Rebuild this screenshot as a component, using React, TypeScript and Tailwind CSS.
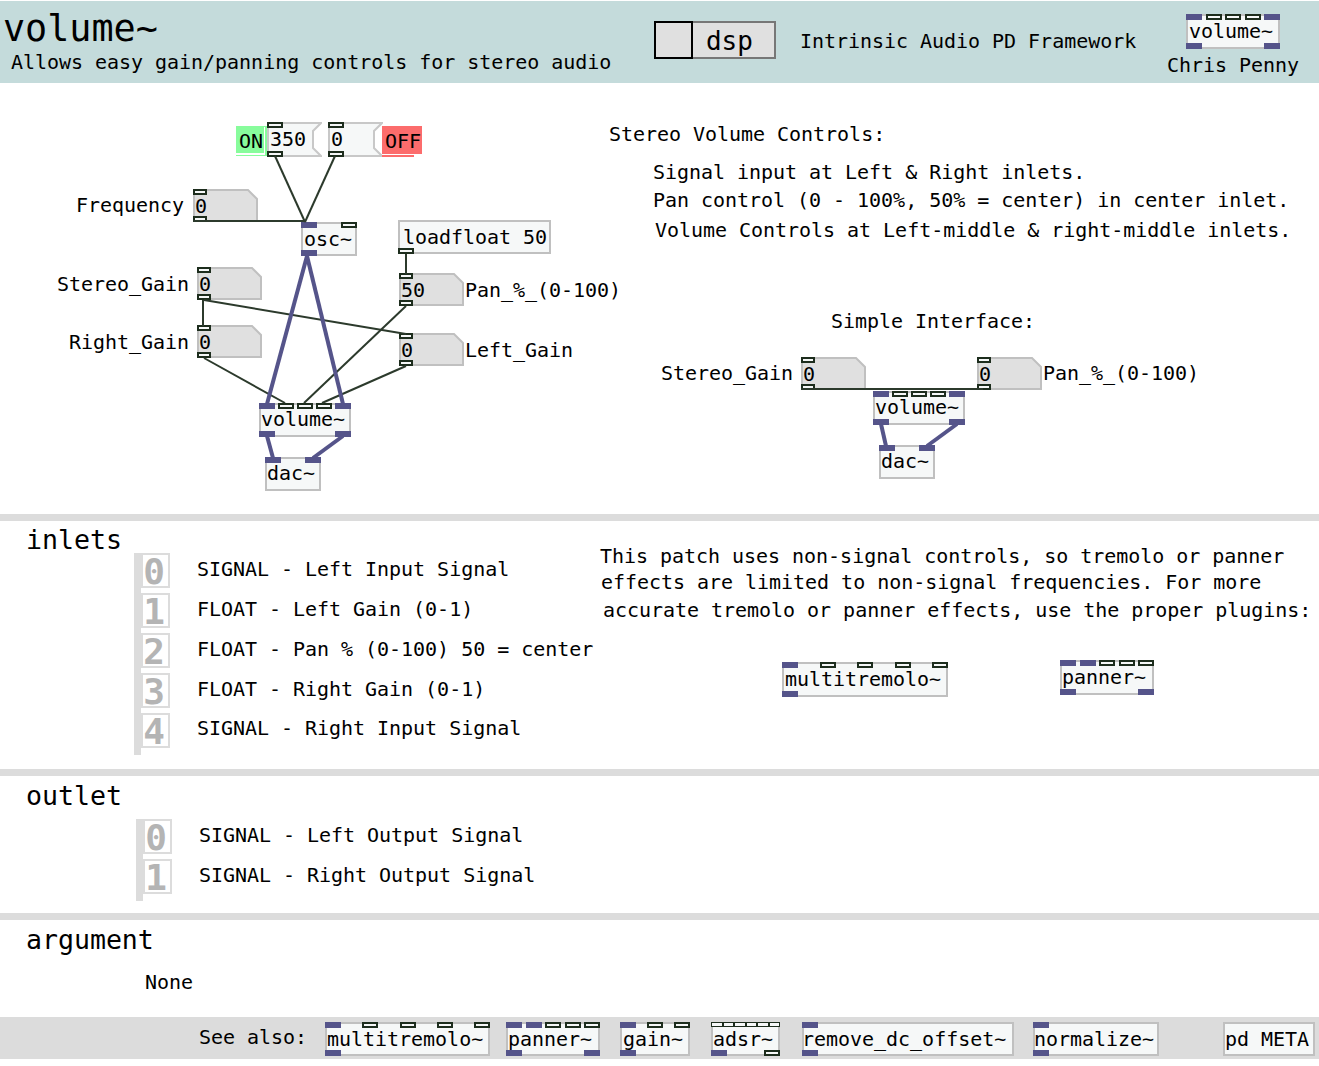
import { twMerge } from 'tailwind-merge'

const Iolet = ({ kind }: { kind: string }) => {
  if (kind === 's') return <span className="h-[6px] w-[16px] bg-[#55548a]" />
  if (kind === 'n') return <span className="h-[5px] w-[12px] border border-[#1d2d1d] bg-[#f6f8f8]" />
  return <span className="h-[6px] w-[16px] border-2 border-[#1d2d1d] bg-[#f6f8f8]" />
}

const IoRow = ({ list, pos }: { list: string[]; pos: string }) => (
  <span className={`absolute -inset-x-[2px] flex justify-between ${pos}`}>
    {list.map((k, i) => (
      <Iolet key={i} kind={k} />
    ))}
  </span>
)

type ObjProps = {
  text: string
  cls: string
  ins?: string
  outs?: string
}

const Obj = ({ text, cls, ins = '', outs = '' }: ObjProps) => (
  <div
    className={twMerge(
      'box-border h-[34px] shrink-0 border-2 border-[#c0c0c0] bg-[#f6f8f8] pl-0 text-[20px] leading-[30px] whitespace-pre text-black',
      cls,
    )}
  >
    {text}
    {ins && <IoRow list={ins.split(' ')} pos="-top-[2px]" />}
    {outs && <IoRow list={outs.split(' ')} pos="-bottom-[2px]" />}
  </div>
)

const NumBox = ({ text, cls }: { text: string; cls: string }) => (
  <div className={`absolute h-[33px] w-[65px] text-[20px] leading-[35px] ${cls}`}>
    <svg className="absolute inset-0" width="65" height="33">
      <polygon points="1,1 55,1 64,10 64,32 1,32" fill="#e0e0e0" stroke="#c0c0c0" strokeWidth="2" />
    </svg>
    <span className="absolute left-[2px] top-0">{text}</span>
    <span className="absolute top-0 left-0 h-[6px] w-[14px] border-2 border-[#1d2d1d] bg-[#f6f8f8]" />
    <span className="absolute bottom-0 left-0 h-[6px] w-[14px] border-2 border-[#1d2d1d] bg-[#f6f8f8]" />
  </div>
)

const MsgNum = ({ text, cls }: { text: string; cls: string }) => (
  <div className={`absolute h-[35px] w-[55px] text-[20px] leading-[35px] ${cls}`}>
    <svg className="absolute inset-0" width="55" height="35">
      <polygon points="1,1 54,1 46,9 46,26 54,34 1,34" fill="#f6f8f8" stroke="#c8c8c8" strokeWidth="2" />
    </svg>
    <span className="absolute left-[3px] top-0">{text}</span>
    <span className="absolute top-0 left-0 h-[6px] w-[16px] border-2 border-[#1d2d1d] bg-[#f6f8f8]" />
    <span className="absolute bottom-0 left-0 h-[6px] w-[16px] border-2 border-[#1d2d1d] bg-[#f6f8f8]" />
  </div>
)

const Label = ({ text, cls }: { text: string; cls: string }) => (
  <span className={`absolute text-[20px] leading-[24px] whitespace-pre ${cls}`}>{text}</span>
)

const Wires = () => (
  <svg className="absolute inset-0" width="1319" height="424" viewBox="0 90 1319 424">
    <g stroke="#2c3a2c" strokeWidth="2" fill="none">
      <line x1="275" y1="156" x2="305" y2="222" />
      <line x1="335" y1="156" x2="305" y2="222" />
      <line x1="193" y1="221" x2="305" y2="221" />
      <line x1="406" y1="254" x2="406" y2="274" />
      <line x1="203" y1="300" x2="203" y2="326" />
      <line x1="204" y1="300" x2="406" y2="334" />
      <line x1="204" y1="358" x2="285" y2="403" />
      <line x1="406" y1="306" x2="304" y2="403" />
      <line x1="406" y1="366" x2="322" y2="403" />
      <line x1="801" y1="389" x2="983" y2="389" />
    </g>
    <g stroke="#55548a" strokeWidth="4" fill="none">
      <line x1="307" y1="256" x2="267" y2="404" />
      <line x1="307" y1="256" x2="343" y2="404" />
      <line x1="267" y1="436" x2="273" y2="458" />
      <line x1="343" y1="436" x2="313" y2="458" />
      <line x1="881" y1="424" x2="886" y2="446" />
      <line x1="957" y1="424" x2="927" y2="446" />
    </g>
  </svg>
)

const Patch = () => (
  <section className="relative h-[424px] bg-white">
    <div className="absolute left-[236px] top-[36px] h-[30px] w-[31px] bg-[#88fc9c] pl-[3px] text-[20px] leading-[30px]">
      ON
      <span className="absolute bottom-[1px] left-0 h-[2px] w-[28px] bg-white" />
      <span className="absolute bottom-[1px] right-[2px] h-[28px] w-[1px] bg-white" />
    </div>
    <MsgNum text="350" cls="left-[267px] top-[32px]" />
    <MsgNum text="0" cls="left-[328px] top-[32px]" />
    <div className="absolute left-[382px] top-[36px] h-[28px] w-[40px] bg-[#fc6c6c] pl-[3px] text-[20px] leading-[30px]">
      OFF
      <span className="absolute -bottom-[3px] left-0 h-[3px] w-[32px] border-b-2 border-[#fc6c6c] bg-white" />
    </div>

    <Label text="Frequency" cls="left-[76px] top-[103px]" />
    <NumBox text="0" cls="left-[193px] top-[99px]" />
    <Obj text="osc~" cls="absolute left-[301px] top-[132px] w-[56px] pl-px" ins="s c" outs="s" />
    <Obj text="loadfloat 50" cls="absolute left-[398px] top-[130px] w-[153px] pl-[3px]" outs="c" />
    <NumBox text="50" cls="left-[399px] top-[183px]" />
    <Label text="Pan_%_(0-100)" cls="left-[465px] top-[188px]" />
    <Label text="Stereo_Gain" cls="left-[57px] top-[182px]" />
    <NumBox text="0" cls="left-[197px] top-[177px]" />
    <Label text="Right_Gain" cls="left-[69px] top-[240px]" />
    <NumBox text="0" cls="left-[197px] top-[235px]" />
    <NumBox text="0" cls="left-[399px] top-[243px]" />
    <Label text="Left_Gain" cls="left-[465px] top-[248px]" />
    <Obj text="volume~" cls="absolute left-[259px] top-[313px] w-[92px] leading-[28px]" ins="s c c c s" outs="s s" />
    <Obj text="dac~" cls="absolute left-[265px] top-[367px] w-[56px] leading-[28px]" ins="s s" />

    <Label text="Stereo Volume Controls:" cls="left-[609px] top-[32px]" />
    <Label text="Signal input at Left & Right inlets." cls="left-[653px] top-[70px]" />
    <Label text="Pan control (0 - 100%, 50% = center) in center inlet." cls="left-[653px] top-[98px]" />
    <Label text="Volume Controls at Left-middle & right-middle inlets." cls="left-[655px] top-[128px]" />
    <Label text="Simple Interface:" cls="left-[831px] top-[219px]" />

    <Label text="Stereo_Gain" cls="left-[661px] top-[271px]" />
    <NumBox text="0" cls="left-[801px] top-[267px]" />
    <NumBox text="0" cls="left-[977px] top-[267px]" />
    <Label text="Pan_%_(0-100)" cls="left-[1043px] top-[271px]" />
    <Obj text="volume~" cls="absolute left-[873px] top-[301px] w-[92px] leading-[28px]" ins="s c c c s" outs="s s" />
    <Obj text="dac~" cls="absolute left-[879px] top-[355px] w-[56px] leading-[28px]" ins="s s" />

    <Wires />
  </section>
)

const Header = () => (
  <header className="mt-[1px] flex h-[82px] bg-[#c4dbdb]">
    <div className="ml-[3px] w-[651px] shrink-0">
      <h1 className="mt-[8px] text-[36.8px] leading-[40px]">volume~</h1>
      <p className="ml-[8px] mt-[1px] text-[20px] leading-[24px]">Allows easy gain/panning controls for stereo audio</p>
    </div>
    <div className="mt-[20px] box-border h-[38px] w-[39px] shrink-0 border-2 border-black bg-[#e0e0e0]" />
    <div className="mt-[20px] box-border h-[38px] w-[83px] shrink-0 border-2 border-l-0 border-[#777777] bg-[#e0e0e0] pl-[13px] text-[26px] leading-[36px]">
      dsp
    </div>
    <p className="ml-[24px] mt-[28px] w-[386px] shrink-0 text-[20px] leading-[24px]">Intrinsic Audio PD Framework</p>
    <div className="flex flex-col items-start">
      <Obj text="volume~" cls="relative mt-[13px] h-[35px] w-[94px] pl-px" ins="s c c c s" outs="s s" />
      <p className="-ml-[19px] mt-[4px] text-[20px] leading-[24px]">Chris Penny</p>
    </div>
  </header>
)

const NumberedRows = ({ rows, cls }: { rows: string[]; cls: string }) => (
  <div className={`flex flex-col gap-[5px] border-l-[7px] border-[#dcdcdc] pb-[7px] ${cls}`}>
    {rows.map((r, i) => (
      <div key={i} className="flex items-center">
        <span className="box-border h-[35px] w-[29px] shrink-0 border-2 border-[#dcdcdc] pr-[3px] text-center text-[36px] font-bold leading-[33px] text-[#b4b4b4]">
          {i}
        </span>
        <span className={`ml-[27px] text-[20px] leading-[24px] whitespace-pre ${i === 4 ? '-mt-[5px]' : '-mt-[3px]'}`}>{r}</span>
      </div>
    ))}
  </div>
)

const Title = ({ text }: { text: string }) => <h2 className="text-[26.6px] leading-[27px]">{text}</h2>

const Inlets = () => (
  <section className="flex h-[255px] border-t-[7px] border-[#dcdcdc]">
    <div className="w-[600px] shrink-0 pl-[26px] pt-[5px]">
      <Title text="inlets" />
      <NumberedRows
        cls="ml-[108px]"
        rows={[
          'SIGNAL - Left Input Signal',
          'FLOAT - Left Gain (0-1)',
          'FLOAT - Pan % (0-100) 50 = center',
          'FLOAT - Right Gain (0-1)',
          'SIGNAL - Right Input Signal',
        ]}
      />
    </div>
    <div className="pt-[22px] text-[20px] leading-[27px] whitespace-pre">
      <p>This patch uses non-signal controls, so tremolo or panner</p>
      <p className="ml-[1px] -mt-[1px]">effects are limited to non-signal frequencies. For more</p>
      <p className="ml-[3px] mt-[1px]">accurate tremolo or panner effects, use the proper plugins:</p>
      <div className="ml-[182px] mt-[38px] flex items-start">
        <Obj text="multitremolo~" cls="relative h-[35px] w-[166px] pl-px" ins="s c c c c" outs="s" />
        <Obj text="panner~" cls="relative ml-[112px] -mt-[2px] h-[35px] w-[94px]" ins="s s c c c" outs="s s" />
      </div>
    </div>
  </section>
)

const Outlet = () => (
  <section className="h-[144px] border-t-[7px] border-[#dcdcdc] pl-[26px] pt-[6px]">
    <Title text="outlet" />
    <NumberedRows cls="ml-[110px] mt-[10px]" rows={['SIGNAL - Left Output Signal', 'SIGNAL - Right Output Signal']} />
  </section>
)

const Argument = () => (
  <section className="h-[104px] border-t-[7px] border-[#dcdcdc] pl-[26px] pt-[6px]">
    <Title text="argument" />
    <p className="ml-[119px] mt-[17px] text-[20px] leading-[24px]">None</p>
  </section>
)

const Footer = () => (
  <footer className="flex h-[42px] items-start bg-[#dcdcdc] pl-[199px] pt-[5px]">
    <span className="mr-[18px] shrink-0 pt-[3px] text-[20px] leading-[24px] whitespace-pre">See also:</span>
    <Obj text="multitremolo~" cls="relative w-[165px]" ins="s c c c c" outs="s" />
    <Obj text="panner~" cls="relative ml-[16px] w-[94px]" ins="s s c c c" outs="s s" />
    <Obj text="gain~" cls="relative ml-[20px] w-[70px] pl-px" ins="s c c" outs="s" />
    <Obj text="adsr~" cls="relative ml-[21px] w-[69px]" ins="n n n n n n" outs="s c" />
    <Obj text="remove_dc_offset~" cls="relative ml-[22px] w-[212px] pl-0 indent-[-2px]" ins="s" outs="s" />
    <Obj text="normalize~" cls="relative ml-[19px] w-[126px] indent-[-1px]" ins="s" outs="s" />
    <Obj text="pd META" cls="relative ml-[64px] w-[92px]" />
  </footer>
)

const App = () => (
  <div className="h-[1066px] w-[1319px] overflow-hidden bg-white font-['DejaVu_Sans_Mono',monospace] tracking-[-0.035px] text-black">
    <Header />
    <div className="h-[7px]" />
    <Patch />
    <Inlets />
    <Outlet />
    <Argument />
    <Footer />
  </div>
)

export default App
